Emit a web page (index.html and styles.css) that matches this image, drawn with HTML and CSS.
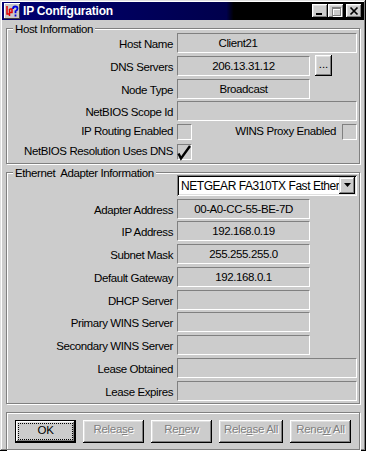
FILE: index.html
```html
<!DOCTYPE html>
<html lang="en">
<head>
<meta charset="utf-8">
<title>IP Configuration</title>
<link rel="stylesheet" href="styles.css">
</head>
<body>
<div class="window">
  <div class="titlebar">
    <svg class="app-icon" width="16" height="16" viewBox="0 0 16 16">
      <rect x="0" y="0" width="16" height="16" fill="#c8c8c8"/>
      <path d="M0 0H16V1H1V16H0Z" fill="#fff"/>
      <path d="M15 1H16V16H0V15H15Z" fill="#404040"/>
      <path d="M3 3V11H5.5M5.5 6V13M5.5 6H8V9.5H5.5" stroke="#e00000" stroke-width="1.5" fill="none"/>
      <path d="M9 6Q9 3.5 11.2 3.5Q13.5 3.5 13.5 5.8Q13.5 7.3 11.5 8.2V10.2M11.5 11.5V13.5" stroke="#0000e0" stroke-width="1.8" fill="none"/>
    </svg>
    <span class="title">IP Configuration</span>
    <div class="caption-buttons">
      <span class="cap-btn">
        <svg width="16" height="14" viewBox="0 0 16 14"><rect x="4" y="9" width="6" height="2" fill="#000"/></svg>
      </span>
      <span class="cap-btn">
        <svg width="16" height="14" viewBox="0 0 16 14">
          <path d="M4 3h9v9h-9zM5 5h7v6h-7z" fill-rule="evenodd" fill="#fff" transform="translate(1 1)"/>
          <path d="M4 3h9v9h-9zM5 5h7v6h-7z" fill-rule="evenodd" fill="#808080"/>
        </svg>
      </span>
      <span class="cap-btn close">
        <svg width="16" height="14" viewBox="0 0 16 14"><path d="M4.5 3.5L11.5 10.5M11.5 3.5L4.5 10.5" stroke="#000" stroke-width="1.7"/></svg>
      </span>
    </div>
  </div>

  <div class="client">
    <section class="group">
      <div class="group-title">Host Information</div>
      <div class="form">
        <div class="lbl">Host Name</div>
        <div class="field wide host">Client21</div>

        <div class="lbl">DNS Servers</div>
        <div class="field-line"><div class="field">206.13.31.12</div><span class="more">...</span></div>

        <div class="lbl">Node Type</div>
        <div class="field">Broadcast</div>

        <div class="lbl">NetBIOS Scope Id</div>
        <div class="field wide"></div>

        <div class="lbl cb-lbl">IP Routing Enabled</div>
        <div class="cb-line"><span class="check"></span><span class="cb-text">WINS Proxy Enabled</span><span class="check"></span></div>

        <div class="lbl cb-lbl">NetBIOS Resolution Uses DNS</div>
        <div class="cb-line"><span class="check"><svg width="15" height="17" viewBox="0 0 15 17"><path d="M1.5 9.5L4 14.5L13 2" stroke="#000" stroke-width="2.4" fill="none"/></svg></span></div>
      </div>
    </section>

    <section class="group ethernet">
      <div class="group-title">Ethernet&nbsp; Adapter Information</div>
      <div class="form first-combo">
        <div class="lbl"></div>
        <div class="combo">
          <span class="combo-text">NETGEAR FA310TX Fast Ethernet Adapter</span>
          <span class="combo-btn"><svg width="7" height="4" viewBox="0 0 7 4"><path d="M0 0H7L3.5 4Z" fill="#000"/></svg></span>
        </div>

        <div class="lbl">Adapter Address</div>
        <div class="field">00-A0-CC-55-BE-7D</div>

        <div class="lbl">IP Address</div>
        <div class="field">192.168.0.19</div>

        <div class="lbl">Subnet Mask</div>
        <div class="field">255.255.255.0</div>

        <div class="lbl">Default Gateway</div>
        <div class="field">192.168.0.1</div>

        <div class="lbl">DHCP Server</div>
        <div class="field"></div>

        <div class="lbl">Primary WINS Server</div>
        <div class="field"></div>

        <div class="lbl">Secondary WINS Server</div>
        <div class="field"></div>

        <div class="lbl">Lease Obtained</div>
        <div class="field wide"></div>

        <div class="lbl">Lease Expires</div>
        <div class="field wide"></div>
      </div>
    </section>

    <div class="group buttons">
      <button class="btn default">OK</button>
      <button class="btn" disabled>Relea<u>s</u>e</button>
      <button class="btn" disabled>Re<u>n</u>ew</button>
      <button class="btn wide" disabled>Rele<u>a</u>se All</button>
      <button class="btn" disabled>Rene<u>w</u> All</button>
    </div>
  </div>
</div>
</body>
</html>
```

FILE: styles.css
```css
* {
  box-sizing: border-box;
}

html,
body {
  margin: 0;
  padding: 0;
}

body {
  width: 366px;
  height: 451px;
  overflow: hidden;
  background: #cccccc;
  font-family: "Liberation Sans", Arial, sans-serif;
  font-size: 11.5px;
  letter-spacing: -0.4px;
  color: #000;
}

.window {
  width: 366px;
  height: 451px;
  padding: 2px;
  background: #cccccc;
  box-shadow: inset -1px -1px #000, inset 1px 1px #dfdfdf, inset -2px -2px #808080, inset 2px 2px #fff;
  display: flex;
  flex-direction: column;
}

.titlebar {
  height: 18px;
  flex: none;
  display: flex;
  align-items: center;
  padding: 0 2px;
  background: linear-gradient(90deg, #000072 0%, #00004c 62%, #000000 64%, #000000 100%);
  color: #fff;
}

.app-icon {
  flex: none;
  margin-right: 3px;
}

.title {
  flex: 1;
  font-weight: bold;
  font-size: 12px;
  letter-spacing: -0.2px;
  line-height: 18px;
  white-space: nowrap;
}

.caption-buttons {
  display: flex;
  flex: none;
}

.cap-btn {
  width: 16px;
  height: 14px;
  display: block;
  background: #cccccc;
  box-shadow: inset -1px -1px #000, inset 1px 1px #fff, inset -2px -2px #808080, inset 2px 2px #dfdfdf;
}

.cap-btn svg {
  display: block;
}

.cap-btn.close {
  margin-left: 2px;
}

.client {
  flex: 1;
  padding: 8px 4px 0 4px;
  display: flex;
  flex-direction: column;
}

.group {
  border: 1px solid #808080;
  box-shadow: inset 1px 1px #fff, 1px 1px #fff;
}

.group + .group {
  margin-top: 8px;
}

.group-title {
  width: max-content;
  height: 10px;
  line-height: 12px;
  margin: -6px 0 0 6px;
  padding: 0 2px;
  background: #cccccc;
  white-space: nowrap;
}

.form {
  display: grid;
  grid-template-columns: 166px 182px;
  column-gap: 4px;
  row-gap: 2.75px;
  padding-bottom: 2px;
  align-items: start;
}

.form.first-combo {
  margin-top: -2px;
}

.lbl {
  height: 20px;
  line-height: 20px;
  padding-top: 1px;
  text-align: right;
  white-space: nowrap;
}

.lbl.cb-lbl {
  height: 17px;
  line-height: 15px;
  padding-top: 0;
}

.field {
  width: 133px;
  height: 20px;
  border: 1px solid;
  border-color: #808080 #fff #fff #808080;
  line-height: 18px;
  text-align: center;
  white-space: nowrap;
  overflow: hidden;
}

.field.wide {
  width: 180px;
}

.field.host {
  padding-right: 58px;
}

.field-line {
  display: flex;
  align-items: flex-start;
}

.more {
  width: 17px;
  height: 21px;
  margin: -1px 0 0 5px;
  display: block;
  background: #cccccc;
  box-shadow: inset -1px -1px #000, inset 1px 1px #fff, inset -2px -2px #808080, inset 2px 2px #dfdfdf;
  text-align: center;
  line-height: 19px;
  letter-spacing: 0;
}

.cb-line {
  width: 180px;
  height: 17px;
  display: flex;
  align-items: flex-start;
}

.check {
  width: 15px;
  height: 16px;
  flex: none;
  border: 1px solid;
  border-color: #808080 #fff #fff #808080;
  position: relative;
}

.check svg {
  position: absolute;
  left: -1px;
  top: -1px;
}

.cb-text {
  flex: 1;
  text-align: right;
  margin-right: 6px;
  line-height: 15px;
  white-space: nowrap;
}

.combo {
  width: 180px;
  height: 21px;
  display: flex;
  align-items: center;
  padding: 2px;
  background: #fff;
  box-shadow: inset 1px 1px #808080, inset -1px -1px #fff, inset 2px 2px #000, inset -2px -2px #dfdfdf;
}

.combo-text {
  flex: 1;
  height: 17px;
  overflow: hidden;
  white-space: nowrap;
  padding: 1px 0 0 2px;
  line-height: 17px;
  font-size: 12px;
  letter-spacing: -0.45px;
}

.combo-btn {
  width: 16px;
  height: 17px;
  flex: none;
  display: flex;
  align-items: center;
  justify-content: center;
  background: #cccccc;
  box-shadow: inset -1px -1px #000, inset 1px 1px #dfdfdf, inset -2px -2px #808080, inset 2px 2px #fff;
}

.combo-btn svg {
  display: block;
}

.buttons {
  margin-top: 4px;
  display: flex;
  gap: 7px;
  padding: 7px 0 6px 8px;
}

.btn {
  width: 61px;
  height: 23px;
  flex: none;
  padding: 0 0 4px;
  border: 0;
  background: #cccccc;
  font: inherit;
  letter-spacing: -0.3px;
  line-height: 19px;
  white-space: nowrap;
  color: #000;
  box-shadow: inset -1px -1px #000, inset 1px 1px #fff, inset -2px -2px #808080, inset 2px 2px #dfdfdf;
}

.btn.wide {
  width: 64px;
}

.btn.default {
  border: 1px solid #000;
  outline: 1px dotted #000;
  outline-offset: -4px;
}

.btn:disabled {
  color: #808080;
  text-shadow: 1px 1px 0 #fff;
}
```
